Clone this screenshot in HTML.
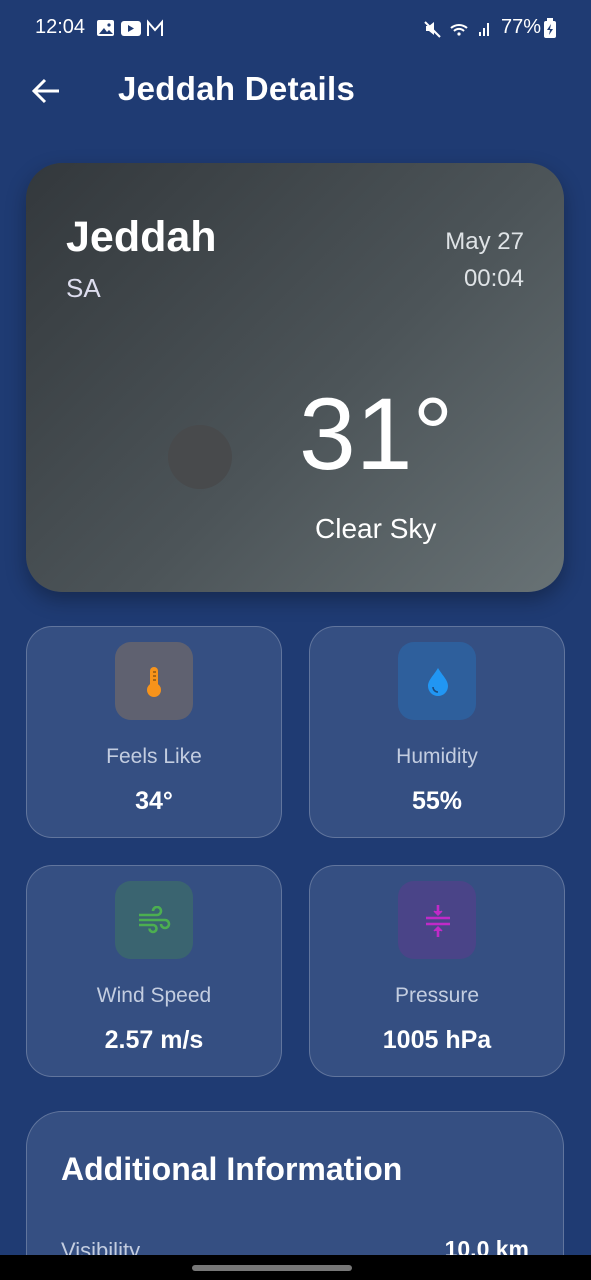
<!DOCTYPE html>
<html style="overflow:hidden;height:1280px"><head><meta charset="utf-8"><style>
*{margin:0;padding:0;box-sizing:border-box}
body{width:591px;height:1280px;background:#1f3b73;font-family:"Liberation Sans",Roboto,sans-serif;color:#fff;position:relative;overflow:hidden}
.abs{position:absolute}
.card{position:absolute;background:#354f82;border:1px solid rgba(255,255,255,0.22);border-radius:26px}
.ib{position:absolute;left:88px;top:15px;width:78px;height:78px;border-radius:16px}
.lbl{position:absolute;left:0;right:0;top:118px;text-align:center;font-size:21px;color:#c3cde0}
.val{position:absolute;left:0;right:0;top:160px;text-align:center;font-size:25px;font-weight:bold}
</style></head><body>
<div class="abs" style="left:35px;top:16px;font-size:20px">12:04</div>
<svg class="abs" style="left:96px;top:19px" width="74" height="20" viewBox="0 0 74 20">
<rect x="1" y="1" width="17" height="16" rx="2" fill="#fff"/><path d="M3 15l5-6 3 4 2-2 4 4z" fill="#1f3b73"/><circle cx="13" cy="6" r="1.6" fill="#1f3b73"/>
<rect x="25" y="2" width="20" height="15" rx="3" fill="#fff"/><path d="M32 6v7l6-3.5z" fill="#1f3b73"/>
<path d="M52 17V3l7 8 7-8v14" fill="none" stroke="#fff" stroke-width="2"/></svg>
<svg class="abs" style="left:423px;top:19px" width="75" height="20" viewBox="0 0 75 20">
<path d="M3 7h3l5-4v13l-5-4H3z" fill="#fff"/><path d="M2 3l15 15" stroke="#fff" stroke-width="2"/>
<path d="M28 9a12 12 0 0 1 16 0M31 12a7 7 0 0 1 10 0" stroke="#fff" stroke-width="2" fill="none"/><circle cx="36" cy="15" r="1.6" fill="#fff"/>
<rect x="56" y="13" width="2" height="4" fill="#fff"/><rect x="60" y="9" width="2" height="8" fill="#fff"/><rect x="64" y="4" width="2" height="13" fill="#fff"/></svg>
<div class="abs" style="left:501px;top:16px;font-size:20px">77%</div>
<svg class="abs" style="left:544px;top:18px" width="12" height="20"><rect x="0" y="3" width="12" height="17" rx="2" fill="#fff"/><rect x="3" y="0" width="6" height="3" fill="#fff"/><path d="M7 6l-4 6h3l-1 5 4-6H6z" fill="#1f3b73"/></svg>
<svg class="abs" style="left:30px;top:77px" width="32" height="28" viewBox="0 0 32 28"><path d="M29 14H5M15 3L4 14l11 11" stroke="#fff" stroke-width="3" fill="none"/></svg>
<div class="abs" style="left:118px;top:70px;font-size:33px;font-weight:bold;letter-spacing:0.3px">Jeddah Details</div>

<div class="abs" style="left:26px;top:163px;width:538px;height:429px;border-radius:36px;background:linear-gradient(135deg,#33383c 0%,#4c5458 55%,#687275 100%);box-shadow:0 8px 20px rgba(0,0,0,0.3)">
<div class="abs" style="left:40px;top:50px;font-size:43px;font-weight:bold">Jeddah</div>
<div class="abs" style="left:40px;top:110px;font-size:26px;color:#dde">SA</div>
<div class="abs" style="right:40px;top:60px;font-size:24px;color:#dfe3e6;text-align:right;line-height:37px">May 27<br>00:04</div>
<div class="abs" style="left:142px;top:262px;width:64px;height:64px;border-radius:50%;background:#484a4c"></div>
<div class="abs" style="left:273px;top:220px;font-size:102px;font-weight:300;line-height:1">31°</div>
<div class="abs" style="left:289px;top:350px;font-size:28px">Clear Sky</div>
</div>

<div class="card" style="left:26px;top:626px;width:256px;height:212px">
<div class="ib" style="background:#5f6170"></div>
<svg class="abs" style="left:116px;top:38px" width="22" height="34" viewBox="0 0 22 34"><rect x="7" y="2" width="8" height="22" rx="4" fill="#f7931a"/><circle cx="11" cy="25" r="7" fill="#f7931a"/><path d="M10 7h3M10 11h3M10 15h3" stroke="#5a3a10" stroke-width="1"/></svg>
<div class="lbl">Feels Like</div><div class="val">34°</div></div>
<div class="card" style="left:309px;top:626px;width:256px;height:212px">
<div class="ib" style="background:#2e5f9c"></div>
<svg class="abs" style="left:114px;top:38px" width="28" height="34" viewBox="0 0 28 34"><path d="M14 3C10 10 4 15 4 21a10 10 0 0 0 20 0c0-6-6-11-10-18z" fill="#2196f3"/><path d="M9 22a5 5 0 0 0 5 5" stroke="#1a4b80" stroke-width="1.6" fill="none"/></svg>
<div class="lbl">Humidity</div><div class="val">55%</div></div>
<div class="card" style="left:26px;top:865px;width:256px;height:212px">
<div class="ib" style="background:#3a6470"></div>
<svg class="abs" style="left:110px;top:40px" width="34" height="30" viewBox="0 0 34 30"><path d="M2 9h18a4 4 0 1 0-4-4M2 14h26a4 4 0 1 1-4 4M2 19h14a3.5 3.5 0 1 1-3.5 3.5" stroke="#4caf50" stroke-width="2.6" fill="none"/></svg>
<div class="lbl">Wind Speed</div><div class="val">2.57 m/s</div></div>
<div class="card" style="left:309px;top:865px;width:256px;height:212px">
<div class="ib" style="background:#4a4488"></div>
<svg class="abs" style="left:113px;top:37px" width="30" height="36" viewBox="0 0 30 36"><path d="M3 15h24M3 21h24M15 2v9M15 25v9" stroke="#c02ac8" stroke-width="2.6"/><path d="M11 8l4 4 4-4M11 28l4-4 4 4" fill="#c02ac8" stroke="#c02ac8" stroke-width="1.5"/></svg>
<div class="lbl">Pressure</div><div class="val">1005 hPa</div></div>

<div class="card" style="left:26px;top:1111px;width:538px;height:180px;border-radius:36px">
<div class="abs" style="left:34px;top:39px;font-size:32px;font-weight:bold">Additional Information</div>
<div class="abs" style="left:34px;top:126px;font-size:22px;color:#c3cde0">Visibility</div>
<div class="abs" style="right:34px;top:124px;font-size:23px;font-weight:bold">10.0 km</div>
</div>
<div class="abs" style="left:0;top:1255px;width:591px;height:25px;background:#000"></div>
<div class="abs" style="left:192px;top:1265px;width:160px;height:6px;border-radius:3px;background:#777"></div>
</body></html>
